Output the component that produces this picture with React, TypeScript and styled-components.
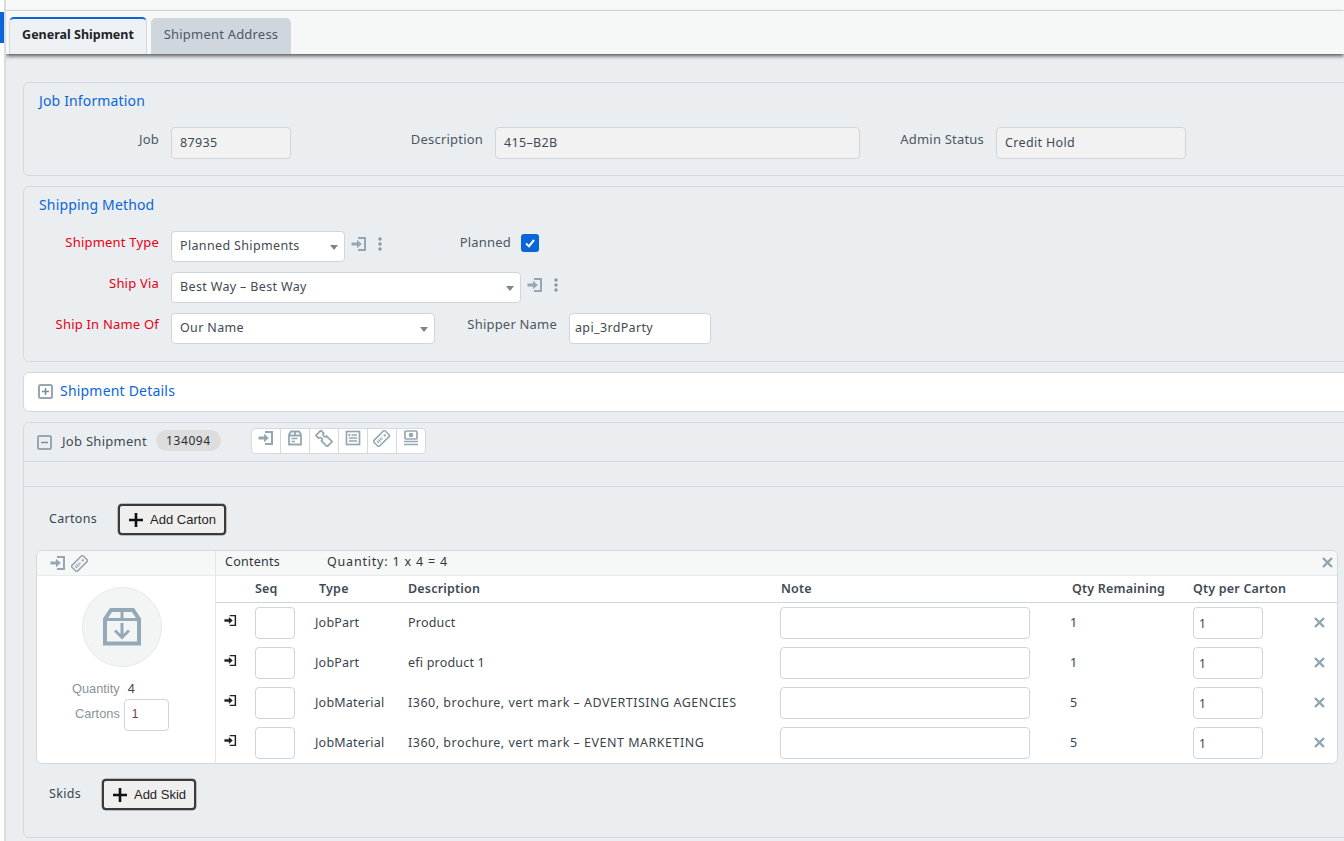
import React from "react";
import styled, { createGlobalStyle } from "styled-components";

const Global = createGlobalStyle`
  html, body { margin: 0; padding: 0; height: 841px; overflow: hidden; background: #fff; }
  #root { height: 841px; overflow: hidden; }
  * { box-sizing: border-box; }
  body { font-family: "Noto Sans", "Open Sans", sans-serif; font-size: 13px; color: #3f4a54; }
`;

const Page = styled.div`display: flex; width: 1344px; height: 841px; overflow: hidden;`;
const Rail = styled.div`
  width: 6px; flex: none; background: #fff; border-right: 2px solid #d9dcde; padding-top: 12px;
`;
const RailMark = styled.div`width: 4px; height: 31px; background: #0a66d8;`;
const Main = styled.div`flex: 1; min-width: 0; background: #ebeef1; overflow: hidden;`;
const TopStrip = styled.div`height: 11px; background: #f7f8f8; border-bottom: 1px solid #e1e5e8;`;
const TabBar = styled.div`
  height: 43px; background: #f6f8f8; display: flex; align-items: flex-end; gap: 4px; padding-left: 3px;
  box-shadow: 0 2px 4px rgba(0,0,0,.65); position: relative;
`;
const Tab = styled.div<{ $active?: boolean }>`
  height: ${p => (p.$active ? 37 : 36)}px; display: flex; align-items: center; justify-content: center;
  width: ${p => (p.$active ? 138 : 140)}px; border-radius: 5px 5px 0 0; padding-bottom: 4px;
  font-size: ${p => (p.$active ? 12.5 : 13)}px; letter-spacing: ${p => (p.$active ? "0" : ".2px")};
  font-weight: ${p => (p.$active ? 700 : 400)};
  color: ${p => (p.$active ? "#1d2329" : "#4d5863")};
  background: ${p => (p.$active ? "#eef1f3" : "#cfd6dd")};
  border-top: ${p => (p.$active ? "2px solid #0a66d8" : "none")};
  border-left: ${p => (p.$active ? "1px solid #d3d9de" : "none")};
  border-right: ${p => (p.$active ? "1px solid #d3d9de" : "none")};
`;
const Content = styled.div`padding: 28px 0 0 17px; width: 1357px; display: flex; flex-direction: column; gap: 10px;`;
const Panel = styled.section<{ $h: number; $white?: boolean }>`
  height: ${p => p.$h}px; border: 1px solid #d3d9de; border-radius: 6px;
  background: ${p => (p.$white ? "#fff" : "#ebeef1")}; width: 1340px; flex: none;
`;
const FormPanel = styled(Panel)`padding: 8px 0 0 15px;`;
const Title = styled.h2`
  margin: 0; height: 20px; line-height: 20px; font-size: 14px; font-weight: 400; color: #0a66d8; letter-spacing: .15px;
`;
const Row = styled.div<{ $mt: number }>`display: flex; align-items: flex-start; margin-top: ${p => p.$mt}px;`;
const Label = styled.label<{ $w: number; $red?: boolean; $lh?: number; $pr?: number }>`
  width: ${p => p.$w}px; flex: none; text-align: right; padding-right: ${p => p.$pr ?? 12}px;
  line-height: ${p => p.$lh ?? 22}px; font-size: 13px;
  letter-spacing: .2px; color: ${p => (p.$red ? "#e60012" : "#4b5660")}; white-space: nowrap;
`;
const Field = styled.div<{ $w: number; $h?: number; $ro?: boolean; $pl?: number }>`
  width: ${p => p.$w}px; height: ${p => p.$h ?? 32}px; flex: none; display: flex; align-items: center;
  border: 1px solid #ced5db; border-radius: 4px; padding: 0 9px 2px ${p => p.$pl ?? 8}px; font-size: 12.5px; letter-spacing: .35px;
  background: ${p => (p.$ro ? "#f2f2f2" : "#fff")}; color: #3f4a54; position: relative;
`;
const Caret = styled.span`
  position: absolute; right: 6px; top: 50%; margin-top: -2px; width: 0; height: 0;
  border-left: 4px solid transparent; border-right: 4px solid transparent; border-top: 5px solid #7d868e;
`;
const IconGroup = styled.div`display: flex; align-items: center; gap: 11px; margin: 5px 0 0 6px; color: #96a7b3;`;
const Check = styled.span`
  width: 18px; height: 18px; border-radius: 3px; background: #0a66d8; flex: none; margin-top: 3px;
  display: flex; align-items: center; justify-content: center;
`;
const DetailsHead = styled.div`
  height: 36px; display: flex; align-items: center; gap: 7px; padding-left: 14px; color: #0a66d8;
  font-size: 14px; letter-spacing: .2px;
`;
const DetailsTitle = styled.span`margin-top: -2px;`;
const JobHead = styled.div`
  height: 39px; display: flex; align-items: center; padding-left: 13px; border-bottom: 1px solid #d3d9de;
`;
const JobName = styled.span`margin-left: 10px; font-size: 13px; letter-spacing: .28px; color: #3f4a54; line-height: 18px; margin-top: -3px;`;
const Pill = styled.span`
  margin: -3px 0 0 9px; width: 65px; height: 21px; border-radius: 11px; background: #dddddd; color: #2a2f34;
  display: flex; align-items: center; justify-content: center; font-size: 12px; letter-spacing: .6px;
`;
const Toolbar = styled.div`
  margin: -3px 0 0 30px; height: 26px; display: flex; border: 1px solid #d3d9de; border-radius: 4px; background: #fff;
`;
const ToolCell = styled.span`
  width: 29px; display: flex; justify-content: center; padding-top: 1px; color: #96a7b3;
  border-left: 1px solid #d3d9de; &:first-child { border-left: none; width: 28px; }
`;
const Band = styled.div`height: 25px; border-bottom: 1px solid #d3d9de;`;
const ActionRow = styled.div<{ $mt: number; $lw: number }>`
  display: flex; align-items: center; margin-top: ${p => p.$mt}px; padding-left: 25px;
  & > span:first-child { width: ${p => p.$lw}px; font-size: 12.5px; letter-spacing: .3px; color: #3a444d; margin-top: -2px; }
`;
const AddButton = styled.button<{ $w: number }>`
  width: ${p => p.$w}px; height: 31px; display: flex; align-items: center; justify-content: center; gap: 7px; padding: 0 0 0 1px;
  border: 2px solid #3a3a3a; border-radius: 4px; background: #efefef; color: #1e1e1e;
  font-family: "Liberation Sans", Arial, sans-serif; font-size: 13px; box-shadow: 0 0 0 .5px #888;
`;
const Carton = styled.div`
  margin: 15px 0 0 12px; width: 1302px; height: 214px; display: flex; background: #fff;
  border: 1px solid #d3d9de; border-radius: 6px; overflow: hidden;
`;
const CartonSide = styled.div`width: 179px; flex: none; border-right: 1px solid #e3e7ea;`;
const SideHead = styled.div`
  height: 25px; background: #f6f8f8; border-bottom: 1px solid #e8ebed; display: flex; align-items: center; gap: 5px;
  padding: 0 0 0 13px; color: #96a7b3;
`;
const Circle = styled.div`
  width: 80px; height: 80px; margin: 11px 0 0 45px; border-radius: 50%; background: #f3f5f5; border: 1px solid #e6e9ea;
  display: flex; align-items: center; justify-content: center; color: #93a9b7;
`;
const QtyLine = styled.div`
  margin-top: 13px; height: 16px; display: flex; align-items: center; padding-left: 35px; gap: 8px;
  font-family: "Liberation Sans", Arial, sans-serif; font-size: 12.8px;
  & > span { color: #8a939b; } & > b { font-weight: 400; color: #3f4a54; }
`;
const CartonsLine = styled.div`
  margin-top: 3px; display: flex; align-items: center; padding-left: 38px; gap: 4px;
  font-family: "Liberation Sans", Arial, sans-serif; font-size: 12.8px; color: #8a939b;
`;
const CartonsLabel = styled.span`margin-top: -4px;`;
const SmallInput = styled(Field)`font-family: "Liberation Sans", Arial, sans-serif; font-size: 12px; letter-spacing: 0; color: #7a3a3a;`;
const CartonMain = styled.div`flex: 1; min-width: 0;`;
const ContentsHead = styled.div`
  height: 25px; background: #f6f8f8; border-bottom: 1px solid #e8ebed; display: flex; align-items: center;
  padding: 0 0 3px 9px; font-size: 12.5px; letter-spacing: .25px; color: #2f363c; position: relative;
`;
const QuantityText = styled.span`margin-left: 47px; letter-spacing: .8px;`;
const CloseCorner = styled.span`position: absolute; right: 4px; top: 6px; color: #8fa2af; display: flex;`;
const grid = "39px 60px 93px 372px 290px 123px 111px 1fr";
const HeadRow = styled.div`
  display: grid; grid-template-columns: ${grid}; height: 27px; align-items: center; border-bottom: 1px solid #ced5db;
  font-size: 12.5px; font-weight: 600; color: #3f4a54; padding-bottom: 2px; letter-spacing: .2px;
`;
const BodyRow = styled.div`
  display: grid; grid-template-columns: ${grid}; height: 40px; align-items: center; font-size: 12.5px; letter-spacing: .2px; color: #3a444d;
`;
const RowIcon = styled.span`padding-left: 8px; display: flex; color: #1d2329; margin-top: -5px;`;
const CellInput = styled.div<{ $w: number }>`
  width: ${p => p.$w}px; height: 32px; border: 1px solid #ced5db; border-radius: 4px; background: #fff;
  display: flex; align-items: center; padding-left: 5px; font-size: 12px;
`;
const RowClose = styled.span`display: flex; justify-content: center; color: #8fa2af; padding: 0 2px 2px 0;`;
const CellText = styled.span<{ $ls?: number }>`margin-top: -2px; white-space: nowrap; letter-spacing: ${p => p.$ls ?? 0.2}px;`;
const HeadCell = styled.span<{ $ml?: number }>`margin-left: ${p => p.$ml ?? 0}px; white-space: nowrap;`;

const EntryIcon = ({ size = 16, w = 2 }: { size?: number; w?: number }) => (
  <svg width={size} height={size} viewBox="0 0 16 16" fill="none">
    <path d="M7 2h7v12H7" stroke="currentColor" strokeWidth={w} />
    <path d="M.5 6.500h5.500V3.800L10.800 8 6 12.200V9.500H.5z" fill="currentColor" />
  </svg>
);
const Dots = () => (
  <svg width="4" height="14" viewBox="0 0 4 14" fill="#8b979f"><circle cx="2" cy="2" r="1.7" /><circle cx="2" cy="7" r="1.7" /><circle cx="2" cy="12" r="1.7" /></svg>
);
const BoxNote = () => (
  <svg width="16" height="16" viewBox="0 0 16 16" fill="none" stroke="currentColor" strokeWidth="1.800">
    <path d="M2 14.500V4.500L4 1.500h8l2 3v10zM2 5.500h12M8 1.500v4" /><path d="M4.500 8.500h6M4.500 11.500h3.500" strokeWidth="1.500" />
  </svg>
);
const Ticket = () => (
  <svg width="18" height="17" viewBox="0 0 18 17" fill="none" stroke="currentColor" strokeWidth="1.800">
    <path transform="rotate(45 9 8.500)" d="M1 5h4a2 2 0 0 0 4 0h8v7H9a2 2 0 0 0-4 0H1z" />
  </svg>
);
const ListNote = () => (
  <svg width="16" height="16" viewBox="0 0 16 16" fill="none" stroke="currentColor" strokeWidth="1.700">
    <rect x="1.500" y="1.500" width="13" height="13" /><path d="M6.500 5h5.500M4 8h8M4 11h8" /><path d="M3.500 5h1.800" strokeWidth="2.200" />
  </svg>
);
const TagIcon = () => (
  <svg width="17" height="17" viewBox="0 0 17 17" fill="none" stroke="currentColor" strokeWidth="1.600">
    <g transform="rotate(-45 8.500 8.500)">
      <rect x=".5" y="4.500" width="16" height="8" rx="1" />
      <path d="M3 8.500h6.500" strokeWidth="3" strokeDasharray="1.200 .8" />
      <circle cx="13" cy="8.500" r="1.200" fill="currentColor" stroke="none" />
    </g>
  </svg>
);
const Money = () => (
  <svg width="16" height="16" viewBox="0 0 16 16" fill="none" stroke="currentColor" strokeWidth="1.700">
    <rect x="2" y="1" width="12" height="8" rx="1" /><circle cx="8" cy="5" r="2.300" fill="currentColor" stroke="none" /><path d="M1 11.500h14M1 14.500h14" />
  </svg>
);
const Plus = ({ color }: { color: string }) => (
  <svg width="14" height="14" viewBox="0 0 14 14" fill="none" stroke={color} strokeWidth="2.600"><path d="M7 0v14M0 7h14" /></svg>
);
const Toggle = ({ minus }: { minus?: boolean }) => (
  <svg width="15" height="15" viewBox="0 0 15 15" fill="none" stroke="#96a7b3">
    <rect x="1" y="1" width="13" height="13" rx="1.500" strokeWidth="2" />
    <path d={minus ? "M4 7.500h7" : "M4 7.500h7M7.500 4v7"} stroke="#7f8a92" strokeWidth="1.500" />
  </svg>
);
const Cross = ({ size = 11 }: { size?: number }) => (
  <svg width={size} height={size} viewBox="0 0 11 11" fill="none" stroke="currentColor" strokeWidth="2.300"><path d="M1 1l9 9M10 1l-9 9" /></svg>
);
const BigBox = () => (
  <svg width="38" height="38" viewBox="0 0 38 38" fill="none" stroke="currentColor" strokeWidth="4">
    <path d="M2 35.500V11L8 2h22l6 9v24.500z" /><path d="M2 11.500h34M19 2v8" strokeWidth="3" /><path d="M19 15v14M12 22.500l7 7 7-7" strokeWidth="3" />
  </svg>
);

const items: [string, string, string, number][] = [
  ["JobPart", "Product", "1", 0.2],
  ["JobPart", "efi product 1", "1", 0.2],
  ["JobMaterial", "I360, brochure, vert mark – ADVERTISING AGENCIES", "5", 0.5],
  ["JobMaterial", "I360, brochure, vert mark – EVENT MARKETING", "5", 0.5],
];

export default function App() {
  return (
    <Page>
      <Global />
      <Rail><RailMark /></Rail>
      <Main>
        <TopStrip />
        <TabBar>
          <Tab $active>General Shipment</Tab>
          <Tab>Shipment Address</Tab>
        </TabBar>
        <Content>
          <FormPanel $h={94}>
            <Title>Job Information</Title>
            <Row $mt={16}>
              <Label $w={132} $lh={25}>Job</Label>
              <Field $w={120} $ro>87935</Field>
              <Label $w={204} $lh={25}>Description</Label>
              <Field $w={365} $ro>415–B2B</Field>
              <Label $w={136} $lh={25}>Admin Status</Label>
              <Field $w={190} $ro>Credit Hold</Field>
            </Row>
          </FormPanel>
          <FormPanel $h={176}>
            <Title>Shipping Method</Title>
            <Row $mt={16}>
              <Label $w={132} $red>Shipment Type</Label>
              <Field $w={174} $h={31}>Planned Shipments<Caret /></Field>
              <IconGroup><EntryIcon /><Dots /></IconGroup>
              <Label $w={139} $pr={10}>Planned</Label>
              <Check>
                <svg width="12" height="12" viewBox="0 0 12 12" fill="none" stroke="#fff" strokeWidth="2"><path d="M2 6.500 5 9.200 10 3" /></svg>
              </Check>
            </Row>
            <Row $mt={10}>
              <Label $w={132} $red>Ship Via</Label>
              <Field $w={350} $h={31}>Best Way – Best Way<Caret /></Field>
              <IconGroup><EntryIcon /><Dots /></IconGroup>
            </Row>
            <Row $mt={10}>
              <Label $w={132} $red>Ship In Name Of</Label>
              <Field $w={264} $h={31}>Our Name<Caret /></Field>
              <Label $w={134}>Shipper Name</Label>
              <Field $w={142} $h={31} $pl={5}>api_3rdParty</Field>
            </Row>
          </FormPanel>
          <Panel $h={40} $white>
            <DetailsHead><Toggle /><DetailsTitle>Shipment Details</DetailsTitle></DetailsHead>
          </Panel>
          <Panel $h={416}>
            <JobHead>
              <Toggle minus />
              <JobName>Job Shipment</JobName>
              <Pill>134094</Pill>
              <Toolbar>
                <ToolCell><EntryIcon /></ToolCell>
                <ToolCell><BoxNote /></ToolCell>
                <ToolCell><Ticket /></ToolCell>
                <ToolCell><ListNote /></ToolCell>
                <ToolCell><TagIcon /></ToolCell>
                <ToolCell><Money /></ToolCell>
              </Toolbar>
            </JobHead>
            <Band />
            <ActionRow $mt={17} $lw={69}>
              <span>Cartons</span>
              <AddButton $w={108}><Plus color="#111" />Add Carton</AddButton>
            </ActionRow>
            <Carton>
              <CartonSide>
                <SideHead><EntryIcon /><TagIcon /></SideHead>
                <Circle><BigBox /></Circle>
                <QtyLine><span>Quantity</span><b>4</b></QtyLine>
                <CartonsLine><CartonsLabel>Cartons</CartonsLabel><SmallInput $w={45} $pl={7}>1</SmallInput></CartonsLine>
              </CartonSide>
              <CartonMain>
                <ContentsHead>
                  Contents<QuantityText>Quantity: 1 x 4 = 4</QuantityText>
                  <CloseCorner><Cross /></CloseCorner>
                </ContentsHead>
                <HeadRow>
                  <span />
                  <HeadCell>Seq</HeadCell>
                  <HeadCell $ml={4}>Type</HeadCell>
                  <HeadCell>Description</HeadCell>
                  <HeadCell $ml={1}>Note</HeadCell>
                  <HeadCell $ml={2}>Qty Remaining</HeadCell>
                  <HeadCell>Qty per Carton</HeadCell>
                  <span />
                </HeadRow>
                {items.map(([type, desc, qty, ls], i) => (
                  <BodyRow key={i}>
                    <RowIcon><EntryIcon size={13} w={1.8} /></RowIcon>
                    <CellInput $w={40} />
                    <CellText>{type}</CellText>
                    <CellText $ls={ls}>{desc}</CellText>
                    <CellInput $w={250} />
                    <CellText>{qty}</CellText>
                    <CellInput $w={70}>1</CellInput>
                    <RowClose><Cross /></RowClose>
                  </BodyRow>
                ))}
              </CartonMain>
            </Carton>
            <ActionRow $mt={15} $lw={53}>
              <span>Skids</span>
              <AddButton $w={94}><Plus color="#111" />Add Skid</AddButton>
            </ActionRow>
          </Panel>
        </Content>
      </Main>
    </Page>
  );
}
